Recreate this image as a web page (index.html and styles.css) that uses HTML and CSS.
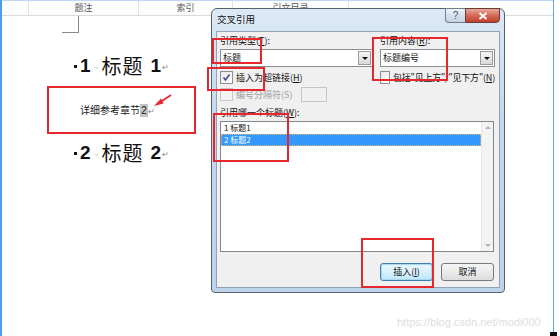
FILE: index.html
```html
<!DOCTYPE html>
<html lang="zh-CN">
<head>
  <meta charset="UTF-8">
  <title>交叉引用</title>
  <link rel="stylesheet" href="styles.css">
</head>
<body>
  <div class="screen">
    <div class="ribbon">
      <span class="tab lead"></span>
      <span class="tab w1">题注</span>
      <span class="tab w2">索引</span>
      <span class="tab w3">引文目录</span>
      <span class="tab rest"></span>
    </div>

    <!-- 文档正文 -->
    <div class="page">
      <div class="corner"></div>
      <div class="heading first">
        <span class="bullet"></span><b class="num">1</b><span class="tabmark">→</span><span class="title">标题</span><b class="num last">1</b><span class="mark">↵</span>
      </div>
      <p class="ref">详细参考章节 <span class="field">2</span><span class="mark">↵</span></p>
      <div class="heading">
        <span class="bullet"></span><b class="num">2</b><span class="tabmark">→</span><span class="title">标题</span><b class="num last">2</b><span class="mark">↵</span>
      </div>
    </div>

    <div class="watermark">https://blog.csdn.net/modi000</div>
    <div class="corner-dot"></div>

    <!-- 对话框 -->
    <div class="dialog">
      <div class="titlebar">
        <span class="caption">交叉引用</span>
        <div class="caption-btns">
          <span class="btn-help">?</span>
          <span class="btn-close">
            <svg width="10" height="8" viewBox="0 0 10 8"><path d="M1.5 1 L8.5 7 M8.5 1 L1.5 7" stroke="#fff" stroke-width="2"/></svg>
          </span>
        </div>
      </div>
      <div class="client">
        <div class="cols">
          <div class="col left">
            <div class="label">引用类型(<u>T</u>):</div>
            <div class="combo"><span class="combo-text">标题</span><span class="combo-btn"><i></i></span></div>
          </div>
          <div class="col right">
            <div class="label">引用内容(<u>R</u>):</div>
            <div class="combo"><span class="combo-text">标题编号</span><span class="combo-btn"><i></i></span></div>
          </div>
        </div>

        <div class="cols checks">
          <label class="check left"><span class="box on">
            <svg width="9" height="9" viewBox="0 0 9 9"><path d="M1.5 4.5 L3.5 7 L7.5 1.5" fill="none" stroke="#3a4f8c" stroke-width="1.6"/></svg>
          </span>插入为超链接(<u>H</u>)</label>
          <label class="check right"><span class="box"></span>包括"见上方"/"见下方"(<u>N</u>)</label>
        </div>

        <div class="row disabled">
          <label class="check"><span class="box dim"></span>编号分隔符(S)</label>
          <span class="sep-input"></span>
        </div>

        <div class="label which">引用哪一个标题(<u>W</u>):</div>
        <div class="listbox">
          <div class="items">
            <div class="item">1 标题1</div>
            <div class="item selected">2 标题2</div>
          </div>
          <div class="scrollbar">
            <span class="arrow up"></span>
            <span class="arrow down"></span>
          </div>
        </div>

        <div class="buttons">
          <span class="button focus">插入(<u>I</u>)</span>
          <span class="button">取消</span>
        </div>
      </div>
    </div>

    <!-- 标注 -->
    <div class="note n1"></div>
    <div class="note n2"></div>
    <div class="note n3"></div>
    <div class="note n4"></div>
    <div class="note n5"></div>
    <div class="note n6"></div>
    <svg class="arrow-note" width="30" height="20" viewBox="0 0 30 20">
      <path d="M21 2 L9 10" stroke="#e8262e" stroke-width="1.6"/>
      <path d="M4 13 L11 5.5 L13.5 10.5 Z" fill="#e8262e"/>
    </svg>
  </div>
</body>
</html>
```

FILE: styles.css
```css
body {
  margin: 0;
  background: #fff;
  font-family: "Noto Sans CJK SC", "Liberation Sans", sans-serif;
}
.screen {
  position: relative;
  width: 560px;
  height: 336px;
  overflow: hidden;
  background: #fff;
}
.screen::before {
  content: "";
  position: absolute;
  left: 0;
  top: 0;
  width: 551px;
  height: 336px;
  border-left: 2px solid #47a0ee;
  border-right: 1px solid #5aa9ee;
  pointer-events: none;
}

/* 功能区 */
.ribbon {
  display: flex;
  height: 14px;
  width: 553px;
  border-top: 1px solid #bcd8f2;
  border-bottom: 1px solid #dadada;
  background: #fdfdfd;
}
.tab {
  font-size: 9px;
  line-height: 14px;
  color: #555;
  text-align: center;
  border-right: 1px solid #e2e2e2;
}
.tab.lead { width: 28px; }
.tab.w1 { width: 109px; }
.tab.w2 { width: 93px; }
.tab.w3 { width: 115px; }
.tab.rest { flex: 1; border-right: none; }

/* 正文 */
.page {
  padding-left: 62px;
}
.corner {
  width: 16px;
  height: 16px;
  border-right: 1px solid #8a8a8a;
  border-bottom: 1px solid #8a8a8a;
}
.heading {
  display: flex;
  align-items: center;
  height: 24px;
  line-height: 24px;
  padding-left: 12px;
  color: #111;
}
.heading.first { margin-top: 21px; }
.bullet {
  width: 3px;
  height: 3px;
  background: #111;
  margin-right: 3px;
}
.num {
  font-family: "Liberation Sans", sans-serif;
  font-size: 19px;
}
.num.last { margin-left: 7px; }
.tabmark {
  font-family: "Liberation Sans", sans-serif;
  font-size: 7px;
  color: #999;
  margin: 2px 2px 0 2px;
}
.title {
  font-size: 20px;
  letter-spacing: 1px;
}
.mark {
  font-family: "Liberation Sans", sans-serif;
  font-size: 8px;
  color: #888;
  margin: 4px 0 0 1px;
}
.ref {
  margin: 24px 0 0;
  padding-left: 18px;
  font-size: 10px;
  line-height: 15px;
  color: #222;
}
.ref .mark { margin: 0; }
.ref + .heading { margin-top: 22px; }
.field {
  font-family: "Liberation Sans", sans-serif;
  background: #c4c4c4;
  padding: 1px 1px;
  margin-left: -2px;
}

.watermark {
  position: absolute;
  left: 397px;
  top: 316px;
  font-family: "Liberation Sans", sans-serif;
  font-size: 11px;
  color: #dedede;
}
.corner-dot {
  position: absolute;
  left: 550px;
  top: 332px;
  width: 7px;
  height: 4px;
  background: #111;
}

/* 对话框 */
.dialog {
  position: absolute;
  left: 211px;
  top: 8px;
  width: 294px;
  height: 285px;
  box-sizing: border-box;
  border: 1px solid #56616d;
  border-radius: 6px 6px 4px 4px;
  background: linear-gradient(180deg, #dce9f6 0%, #c3d7ec 40%, #bcd3ea 100%);
  padding: 0 4px 4px;
  display: flex;
  flex-direction: column;
  font-size: 9px;
  color: #111;
}
.titlebar {
  display: flex;
  justify-content: space-between;
  height: 22px;
  padding-left: 1px;
}
.caption {
  font-size: 9.5px;
  line-height: 20px;
}
.caption-btns {
  display: flex;
  margin-top: -1px;
}
.btn-help {
  width: 19px;
  height: 13px;
  border: 1px solid #6f7f92;
  border-right: none;
  border-radius: 0 0 0 4px;
  background: linear-gradient(180deg, #eef3f9 0%, #d5e0ec 50%, #c5d4e5 100%);
  font-family: "Liberation Sans", sans-serif;
  font-size: 10px;
  line-height: 13px;
  text-align: center;
  color: #4a5565;
}
.btn-close {
  display: flex;
  align-items: center;
  justify-content: center;
  width: 33px;
  height: 13px;
  border: 1px solid #6d3b38;
  border-radius: 0 0 4px 0;
  background: linear-gradient(180deg, #e9a99b 0%, #d46a58 50%, #c0402d 100%);
}
.client {
  flex: 1;
  background: #f0f0f0;
  border: 1px solid #8fa4b9;
  padding: 3px 4px 0 3px;
}
.cols {
  display: flex;
  gap: 7px;
}
.col.left, .check.left { width: 153px; }
.col.right, .check.right { width: 115px; }
.label {
  height: 12px;
  line-height: 12px;
  margin-bottom: 2px;
}
.combo {
  display: flex;
  height: 18px;
  box-sizing: border-box;
  border: 1px solid #8a8e96;
  background: #fff;
}
.combo-text {
  flex: 1;
  line-height: 16px;
  padding-left: 2px;
}
.combo-btn {
  width: 11px;
  margin: 1px;
  border: 1px solid #9a9a9a;
  background: linear-gradient(180deg, #f4f4f4, #dadada);
  display: flex;
  align-items: center;
  justify-content: center;
}
.combo-btn i {
  border-left: 3px solid transparent;
  border-right: 3px solid transparent;
  border-top: 3px solid #111;
}
.checks {
  margin-top: 4px;
}
.check {
  display: flex;
  align-items: center;
  height: 13px;
  white-space: nowrap;
}
.box {
  display: flex;
  align-items: center;
  justify-content: center;
  width: 11px;
  height: 11px;
  border: 1px solid #8f8f8f;
  background: linear-gradient(135deg, #e8e8e8, #fff);
  margin-right: 3px;
}
.box.dim {
  border-color: #c8c8c8;
  background: #f4f4f4;
}
.check.right {
  letter-spacing: -0.2px;
}
.row.disabled {
  display: flex;
  align-items: center;
  gap: 9px;
  height: 14px;
  margin-top: 3px;
  color: #a0a0a0;
}
.sep-input {
  width: 24px;
  height: 13px;
  border: 1px solid #c6c6c6;
  background: #f0f0f0;
}
.label.which {
  margin-top: 6px;
  margin-bottom: 2px;
}
.listbox {
  display: flex;
  width: 274px;
  height: 131px;
  box-sizing: border-box;
  border: 1px solid #828790;
  background: #fff;
}
.items {
  flex: 1;
}
.item {
  height: 12px;
  line-height: 12px;
  font-size: 8px;
  padding-left: 3px;
  overflow: hidden;
}
.item.selected {
  background: #3399ff;
  color: #fff;
  outline: 1px dotted #f0b060;
  outline-offset: -1px;
}
.scrollbar {
  width: 11px;
  background: #f3f3f3;
  border-left: 1px solid #e6e6e6;
  display: flex;
  flex-direction: column;
  justify-content: space-between;
  align-items: center;
  padding: 4px 0;
}
.arrow {
  border-left: 3px solid transparent;
  border-right: 3px solid transparent;
}
.arrow.up { border-bottom: 3px solid #b4b4b4; }
.arrow.down { border-top: 3px solid #b4b4b4; }
.buttons {
  display: flex;
  justify-content: flex-end;
  gap: 8px;
  margin-top: 11px;
  padding-right: 1px;
}
.button {
  width: 53px;
  height: 18px;
  box-sizing: border-box;
  border: 1px solid #7a7a7a;
  border-radius: 3px;
  background: linear-gradient(180deg, #f6f6f6 0%, #ebebeb 50%, #dcdcdc 100%);
  text-align: center;
  line-height: 16px;
}
.button.focus {
  border-color: #3c7fb1;
  background: linear-gradient(180deg, #eaf6fd 0%, #d9f0fc 50%, #bee6fd 100%);
  box-shadow: inset 0 0 0 1px #a8d8f5;
}

/* 红色标注框 */
.note {
  position: absolute;
  border: 2px solid #e8262e;
  box-sizing: border-box;
}
.n1 { left: 47px; top: 86px; width: 149px; height: 48px; }
.n2 { left: 212px; top: 38px; width: 50px; height: 26px; }
.n3 { left: 207px; top: 67px; width: 58px; height: 24px; }
.n4 { left: 372px; top: 37px; width: 76px; height: 44px; }
.n5 { left: 213px; top: 113px; width: 76px; height: 49px; }
.n6 { left: 361px; top: 238px; width: 73px; height: 50px; }
.arrow-note {
  position: absolute;
  left: 150px;
  top: 93px;
}
```
